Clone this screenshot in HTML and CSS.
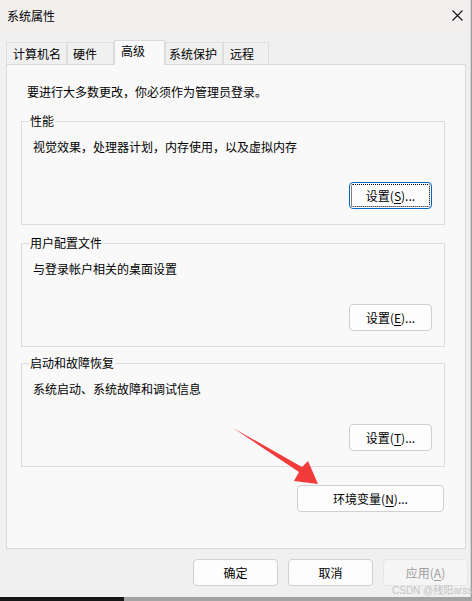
FILE: index.html
```html
<!DOCTYPE html>
<html lang="zh-CN">
<head>
<meta charset="utf-8">
<title>系统属性</title>
<link rel="stylesheet" href="styles.css">
</head>
<body>
<div class="window">
  <div class="titlebar">
    <span class="title">系统属性</span>
    <svg class="close" width="11" height="11" viewBox="0 0 11 11"><path d="M0.5 0.5 L10.5 10.5 M10.5 0.5 L0.5 10.5" stroke="#111" stroke-width="1.1" fill="none"/></svg>
  </div>
  <div class="tabs">
    <div class="tab t1">计算机名</div>
    <div class="tab t2">硬件</div>
    <div class="tab t3 active">高级</div>
    <div class="tab t4">系统保护</div>
    <div class="tab t5">远程</div>
  </div>
  <div class="panel">
    <p class="intro">要进行大多数更改，你必须作为管理员登录。</p>
    <fieldset class="group g1">
      <legend>性能</legend>
      <p class="desc">视觉效果，处理器计划，内存使用，以及虚拟内存</p>
      <div class="row"><button class="btn set focus">设置(<u>S</u>)...</button></div>
    </fieldset>
    <fieldset class="group g2">
      <legend>用户配置文件</legend>
      <p class="desc">与登录帐户相关的桌面设置</p>
      <div class="row"><button class="btn set">设置(<u>E</u>)...</button></div>
    </fieldset>
    <fieldset class="group g3">
      <legend>启动和故障恢复</legend>
      <p class="desc">系统启动、系统故障和调试信息</p>
      <div class="row"><button class="btn set">设置(<u>T</u>)...</button></div>
    </fieldset>
    <div class="envrow"><button class="btn env">环境变量(<u>N</u>)...</button></div>
  </div>
  <div class="footer">
    <button class="btn foot">确定</button>
    <button class="btn foot">取消</button>
    <button class="btn foot disabled">应用(<u>A</u>)</button>
  </div>
</div>
<div class="desktop">
  <div class="dark"></div>
  <div class="grey"></div>
</div>
<div class="watermark">CSDN @残阳arss</div>
<svg class="arrow" width="472" height="601" viewBox="0 0 472 601">
  <polygon points="233,428 302,467 308,461 318,484 294,481 299,472" fill="#f23b3b"/>
</svg>
</body>
</html>
```

FILE: styles.css
```css
* { box-sizing: border-box; }
html, body { margin: 0; padding: 0; }
body {
  width: 472px;
  height: 601px;
  overflow: hidden;
  position: relative;
  background: #9c9c9c;
  font-family: "Noto Sans CJK SC", "Microsoft YaHei", sans-serif;
  font-size: 12px;
  line-height: 16px;
  color: #000;
}
.window {
  width: 471px;
  height: 597px;
  background: #f0f0f0;
  display: flex;
  flex-direction: column;
  border-right: 1px solid #d6d6d6;
}
.titlebar {
  height: 31px;
  flex: none;
  background: #f3efef;
  display: flex;
  align-items: center;
  padding: 0 6px 0 7px;
}
.title { font-size: 12px; }
.close { margin-left: auto; margin-right: 1px; margin-top: -1px; }
.tabs {
  margin-top: 9px;
  height: 24px;
  padding-left: 6px;
  display: flex;
  align-items: flex-end;
  position: relative;
  z-index: 2;
}
.tab {
  height: 22px;
  border: 1px solid #dedede;
  border-bottom: none;
  background: #f0f0f0;
  padding: 3px 0 0 6px;
  white-space: nowrap;
}
.tab.t1 { width: 61px; }
.tab.t2 { width: 47px; padding-left: 5px; }
.tab.t3 { width: 51px; }
.tab.t4 { width: 58px; padding-left: 3px; }
.tab.t5 { width: 46px; }
.tab.active {
  height: 25px;
  margin-bottom: -1px;
  background: #f9f9f9;
  border-color: #dadada;
  padding-top: 2px;
}
.panel {
  margin-left: 6px;
  width: 460px;
  height: 485px;
  flex: none;
  border: 1px solid #dadada;
  background: #f9f9f9;
  padding: 19px 20px 0 14px;
  position: relative;
  z-index: 1;
}
.intro { margin: 0 0 0 6px; }
.group {
  margin: 13px 0 0 0;
  padding: 0 12px 15px 7px;
  border: 1px solid #dcdcdc;
  min-width: 0;
}
.group.g2 { margin-top: 10px; }
.group.g3 { margin-top: 8px; }
.group legend { padding: 0 1px; line-height: 16px; }
.desc { margin: 10px 0 0 4px; }
.row { display: flex; justify-content: flex-end; margin-top: 27px; }
.btn {
  height: 27px;
  border: 1px solid #d0d0d0;
  border-radius: 4px;
  background: #fdfdfd;
  font-family: inherit;
  font-size: 12px;
  line-height: 16px;
  color: #000;
  padding: 0;
}
.btn u { text-underline-offset: 2px; }
.btn.set { width: 83px; }
.btn.focus {
  border-color: #0067c0;
  outline: 1px dotted #000;
  outline-offset: -3px;
}
.envrow { display: flex; justify-content: flex-end; margin-top: 18px; margin-right: 1px; }
.btn.env { width: 147px; }
.footer {
  display: flex;
  justify-content: flex-end;
  gap: 10px;
  margin-top: 10px;
  padding-right: 2px;
}
.btn.foot { width: 85px; }
.btn.disabled {
  background: #f5f5f5;
  border-color: #e6e6e6;
  color: #9d9d9d;
}
.desktop {
  display: flex;
  height: 4px;
}
.desktop .dark { width: 124px; background: #161616; }
.desktop .grey { flex: 1; background: #a3a3a3; }
.watermark {
  position: absolute;
  left: 392px;
  top: 584px;
  font-family: "Liberation Sans", "Noto Sans CJK SC", sans-serif;
  font-size: 10px;
  line-height: 13px;
  color: #c4c4c4;
  white-space: nowrap;
  z-index: 5;
}
.arrow {
  position: absolute;
  left: 0;
  top: 0;
  pointer-events: none;
  z-index: 4;
}
```
